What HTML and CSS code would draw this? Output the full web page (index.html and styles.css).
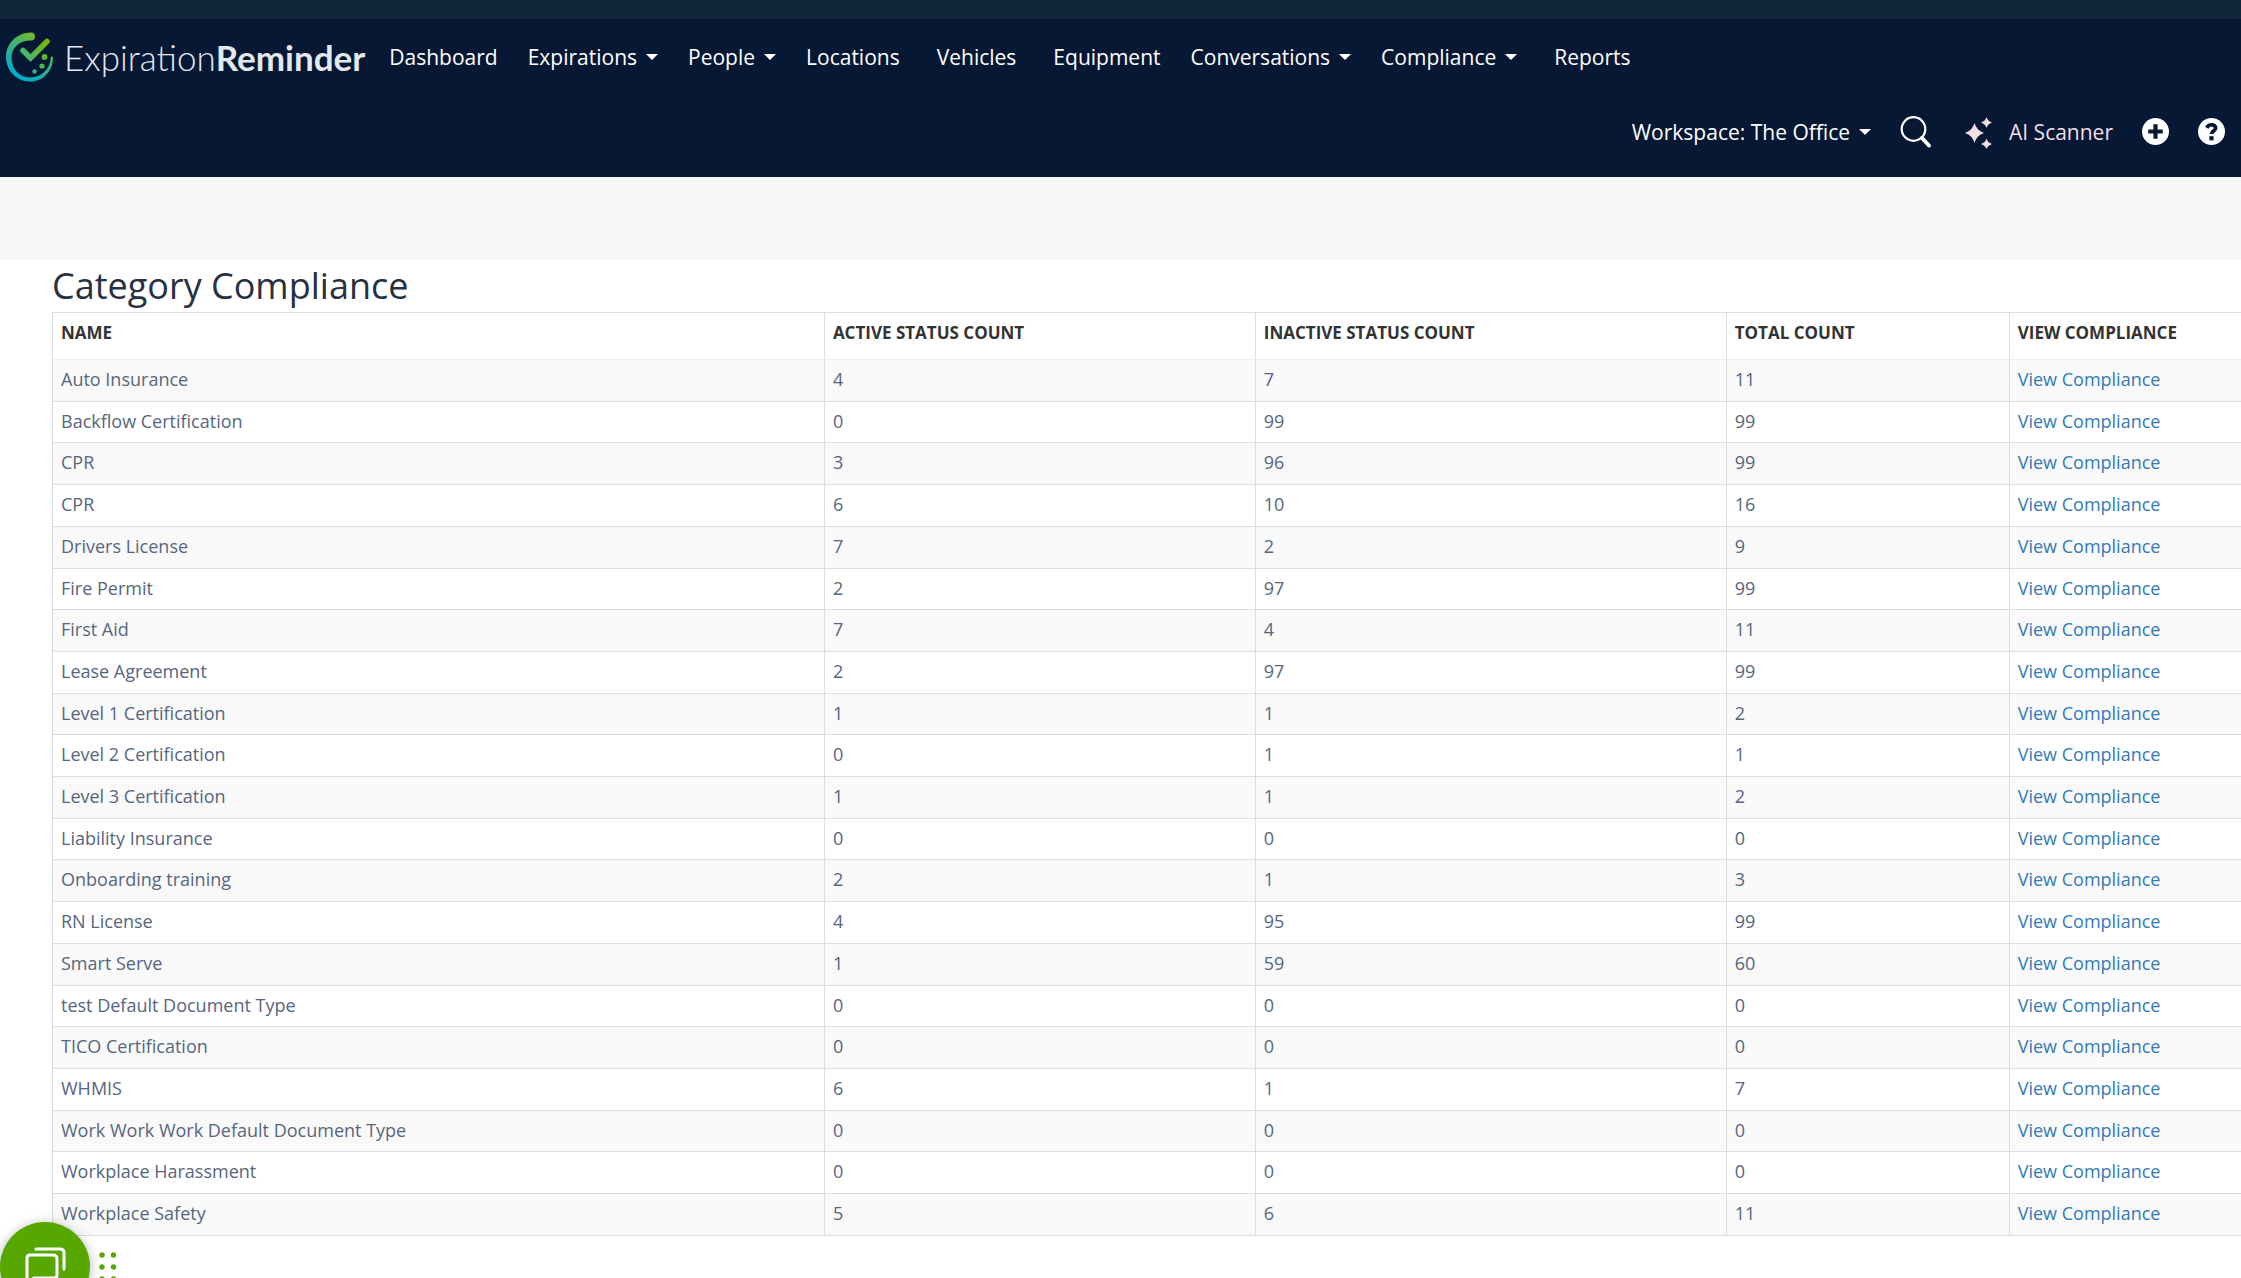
FILE: index.html
```html
<!DOCTYPE html>
<html lang="en">

<head>
    <meta charset="UTF-8">
    <meta name="viewport" content="width=device-width, initial-scale=1.0">
    <title>Category Compliance</title>
    <link rel="stylesheet" href="styles.css">
</head>

<body>
    <div class="top-strip"></div>
    <header class="header">
        <nav class="nav">
            <a class="logo" href="#">
                <svg class="logo-mark" viewBox="0 0 48 50" width="48" height="50" fill="none">
                    <defs>
                        <linearGradient id="ring" x1="10" y1="45" x2="36" y2="2" gradientUnits="userSpaceOnUse">
                            <stop offset="0" stop-color="#00a9d4" />
                            <stop offset="0.5" stop-color="#35b37e" />
                            <stop offset="1" stop-color="#83b81a" />
                        </linearGradient>
                        <linearGradient id="tick" x1="16" y1="24" x2="44" y2="8" gradientUnits="userSpaceOnUse">
                            <stop offset="0" stop-color="#3bb878" />
                            <stop offset="1" stop-color="#84b400" />
                        </linearGradient>
                    </defs>
                    <path d="M25 0.500C11 0.500 0 11.500 0 25C0 38.500 10.500 49.500 24 49.500C37.500 49.500 47 39 47 25.500C47 24.200 45 24.200 44.800 25.500C44.300 37 35.500 45.500 24 45.500C13 45.500 5.500 36.500 5.500 25.500C5.500 16 13 8.500 25 8.500A4 4 0 0 0 25 0.500Z" fill="url(#ring)" />
                    <path d="M17 18.500L24.500 26L41 9.500" stroke="url(#tick)" stroke-width="5.500" stroke-linecap="round" />
                    <circle cx="38.500" cy="25" r="2.900" fill="#62b52f" />
                    <circle cx="36" cy="34" r="2.600" fill="#4cb552" />
                    <circle cx="28.500" cy="39.500" r="2.200" fill="#2fb189" />
                </svg>
                <span class="logo-text">Expiration<b>Reminder</b></span>
            </a>
            <a class="nav-item" href="#">Dashboard</a>
            <button class="nav-item caret" type="button">Expirations</button>
            <button class="nav-item caret" type="button">People</button>
            <a class="nav-item" href="#">Locations</a>
            <a class="nav-item wide" href="#">Vehicles</a>
            <a class="nav-item wide" href="#">Equipment</a>
            <button class="nav-item caret" type="button">Conversations</button>
            <button class="nav-item caret" type="button">Compliance</button>
            <a class="nav-item wide" href="#">Reports</a>
        </nav>
        <div class="tools">
            <button class="nav-item caret" type="button">Workspace: The Office</button>
            <button class="icon-btn" type="button" aria-label="Search">
                <svg viewBox="0 0 32 32" width="32" height="32" fill="none" stroke="#fff">
                    <circle cx="13.500" cy="13" r="11.800" stroke-width="2.200" />
                    <path d="M22 22L29 29.500" stroke-width="3.800" stroke-linecap="round" />
                </svg>
            </button>
            <a class="scanner" href="#">
                <svg viewBox="0 0 28 34" width="28" height="34" fill="#f3dfea">
                    <path d="M9.500 8Q11.500 15.500 19 18Q11.500 20.500 9.500 28Q7.500 20.500 0 18Q7.500 15.500 9.500 8Z" />
                    <path d="M21.500 2Q22.500 6 27 7.500Q22.500 9 21.500 13Q20.500 9 16 7.500Q20.500 6 21.500 2Z" />
                    <path d="M21.500 23.500Q22.500 27.500 27 29Q22.500 30.500 21.500 34Q20.500 30.500 16 29Q20.500 27.500 21.500 23.500Z" />
                </svg>
                AI Scanner
            </a>
            <button class="icon-btn" type="button" aria-label="Add">
                <svg viewBox="0 0 26 26" width="27" height="27">
                    <circle cx="13" cy="13" r="13" fill="#fff" />
                    <path d="M13 6V20M6 13H20" stroke="#061833" stroke-width="4" />
                </svg>
            </button>
            <button class="icon-btn" type="button" aria-label="Help">
                <svg viewBox="0 0 26 26" width="27" height="27" fill="none">
                    <circle cx="13" cy="13" r="13" fill="#fff" />
                    <path d="M8.500 9.500C9.500 7.300 11 6.500 13 6.500C15.500 6.500 17 8 17 9.800C17 12.500 13 12.300 13 15.500" stroke="#061833" stroke-width="3.600" />
                    <rect x="11" y="17.500" width="4" height="4" fill="#061833" />
                </svg>
            </button>
        </div>
    </header>
    <div class="sub-bar"></div>

    <main class="content">
        <h1>Category Compliance</h1>
        <table class="grid">
            <thead>
                <tr>
                    <th class="col-name">Name</th>
                    <th class="col-active">Active Status Count</th>
                    <th class="col-inactive">Inactive Status Count</th>
                    <th class="col-total">Total Count</th>
                    <th>View Compliance</th>
                </tr>
            </thead>
            <tbody>
                <tr><td>Auto Insurance</td><td>4</td><td>7</td><td>11</td><td><a href="#">View Compliance</a></td></tr>
                <tr><td>Backflow Certification</td><td>0</td><td>99</td><td>99</td><td><a href="#">View Compliance</a></td></tr>
                <tr><td>CPR</td><td>3</td><td>96</td><td>99</td><td><a href="#">View Compliance</a></td></tr>
                <tr><td>CPR</td><td>6</td><td>10</td><td>16</td><td><a href="#">View Compliance</a></td></tr>
                <tr><td>Drivers License</td><td>7</td><td>2</td><td>9</td><td><a href="#">View Compliance</a></td></tr>
                <tr><td>Fire Permit</td><td>2</td><td>97</td><td>99</td><td><a href="#">View Compliance</a></td></tr>
                <tr><td>First Aid</td><td>7</td><td>4</td><td>11</td><td><a href="#">View Compliance</a></td></tr>
                <tr><td>Lease Agreement</td><td>2</td><td>97</td><td>99</td><td><a href="#">View Compliance</a></td></tr>
                <tr><td>Level 1 Certification</td><td>1</td><td>1</td><td>2</td><td><a href="#">View Compliance</a></td></tr>
                <tr><td>Level 2 Certification</td><td>0</td><td>1</td><td>1</td><td><a href="#">View Compliance</a></td></tr>
                <tr><td>Level 3 Certification</td><td>1</td><td>1</td><td>2</td><td><a href="#">View Compliance</a></td></tr>
                <tr><td>Liability Insurance</td><td>0</td><td>0</td><td>0</td><td><a href="#">View Compliance</a></td></tr>
                <tr><td>Onboarding training</td><td>2</td><td>1</td><td>3</td><td><a href="#">View Compliance</a></td></tr>
                <tr><td>RN License</td><td>4</td><td>95</td><td>99</td><td><a href="#">View Compliance</a></td></tr>
                <tr><td>Smart Serve</td><td>1</td><td>59</td><td>60</td><td><a href="#">View Compliance</a></td></tr>
                <tr><td>test Default Document Type</td><td>0</td><td>0</td><td>0</td><td><a href="#">View Compliance</a></td></tr>
                <tr><td>TICO Certification</td><td>0</td><td>0</td><td>0</td><td><a href="#">View Compliance</a></td></tr>
                <tr><td>WHMIS</td><td>6</td><td>1</td><td>7</td><td><a href="#">View Compliance</a></td></tr>
                <tr><td>Work Work Work Default Document Type</td><td>0</td><td>0</td><td>0</td><td><a href="#">View Compliance</a></td></tr>
                <tr><td>Workplace Harassment</td><td>0</td><td>0</td><td>0</td><td><a href="#">View Compliance</a></td></tr>
                <tr><td>Workplace Safety</td><td>5</td><td>6</td><td>11</td><td><a href="#">View Compliance</a></td></tr>
            </tbody>
        </table>
    </main>

    <div class="chat">
        <button class="chat-btn" type="button" aria-label="Chat">
            <svg viewBox="0 0 42 42" width="42" height="42" fill="none" stroke="#fff" stroke-width="3" stroke-linecap="round" stroke-linejoin="round">
                <path d="M12 3H36Q40 3 40 7V23" />
                <path d="M6 9H29Q33 9 33 13V29Q33 32 30 32H10L3 38V12Q3 9 6 9Z" />
            </svg>
        </button>
        <svg class="chat-drag" viewBox="0 0 18 30" width="18" height="30" fill="#56a700">
            <circle cx="3" cy="3" r="2.700" /><circle cx="14.500" cy="3" r="2.700" />
            <circle cx="3" cy="15" r="2.700" /><circle cx="14.500" cy="15" r="2.700" />
            <circle cx="3" cy="27" r="2.700" /><circle cx="14.500" cy="27" r="2.700" />
        </svg>
    </div>
</body>

</html>
```
FILE: styles.css
```css
* {
    box-sizing: border-box;
}

body {
    margin: 0;
    background: #fff;
    color: #56667e;
    font-family: "Open Sans", "Noto Sans", sans-serif;
    font-size: 18px;
    overflow: hidden;
}

a {
    color: #337ab7;
    text-decoration: none;
}

button {
    border: 0;
    padding: 0;
    background: none;
    font: inherit;
    cursor: pointer;
}

svg {
    display: block;
}

/* header */

.top-strip {
    height: 19px;
    background: #10263b;
}

.header {
    background: #061833;
    padding-bottom: 8px;
}

.nav,
.tools {
    display: flex;
    align-items: center;
    height: 75px;
}

.nav {
    padding-left: 6px;
}

.logo {
    display: flex;
    align-items: center;
    gap: 10px;
    margin-right: 9px;
}

.logo-text {
    color: #e4e8ef;
    font-family: Lato, sans-serif;
    font-size: 35px;
    font-weight: 300;
    line-height: 40px;
}

.logo-text b {
    font-weight: 700;
}

.nav-item {
    display: flex;
    align-items: center;
    padding: 0 15px;
    color: #fff;
    font-size: 21px;
    line-height: 30px;
    white-space: nowrap;
}

.wide {
    padding-left: 22px;
}

.caret::after {
    content: "";
    margin-left: 9px;
    border: 6px solid transparent;
    border-top-color: #fff;
    border-bottom: 0;
}

.tools {
    justify-content: flex-end;
    gap: 29px;
    padding-right: 16px;
}

.tools .nav-item {
    padding: 0;
}

.scanner {
    display: flex;
    align-items: center;
    gap: 16px;
    margin-left: 4px;
    color: #f3dfea;
    font-size: 21px;
    line-height: 30px;
}

.sub-bar {
    height: 83px;
    background: #f7f7f7;
}

/* table */

.content {
    padding-left: 52px;
}

h1 {
    margin: 0;
    color: #273142;
    font-size: 36px;
    font-weight: 400;
    line-height: 52px;
}

.grid {
    width: 100%;
    border-collapse: collapse;
    border: 1px solid #ddd;
    border-right: 0;
}

.grid th,
.grid td {
    border-left: 1px solid #ddd;
    padding: 7px 8px 8px;
    text-align: left;
}

.grid th {
    border-bottom: 1px solid #eee;
    padding: 7px 8px 13px;
    color: #333;
    font-size: 17px;
    line-height: 26px;
    text-transform: uppercase;
}

.grid td {
    border-bottom: 1px solid #ddd;
    line-height: 1.428;
}

.grid tbody tr:nth-child(odd) {
    background: #f9f9f9;
}

.col-name {
    width: 35.27%;
}

.col-active {
    width: 19.69%;
}

.col-inactive {
    width: 21.52%;
}

.col-total {
    width: 12.93%;
}

/* chat bubble */

.chat {
    position: fixed;
    left: 0;
    bottom: -34px;
    display: flex;
    align-items: center;
    gap: 9px;
}

.chat-btn {
    display: flex;
    align-items: center;
    justify-content: center;
    width: 90px;
    height: 90px;
    border-radius: 50%;
    background: #56a700;
    box-shadow: 0 2px 12px rgba(0, 0, 0, 0.3);
}
```
